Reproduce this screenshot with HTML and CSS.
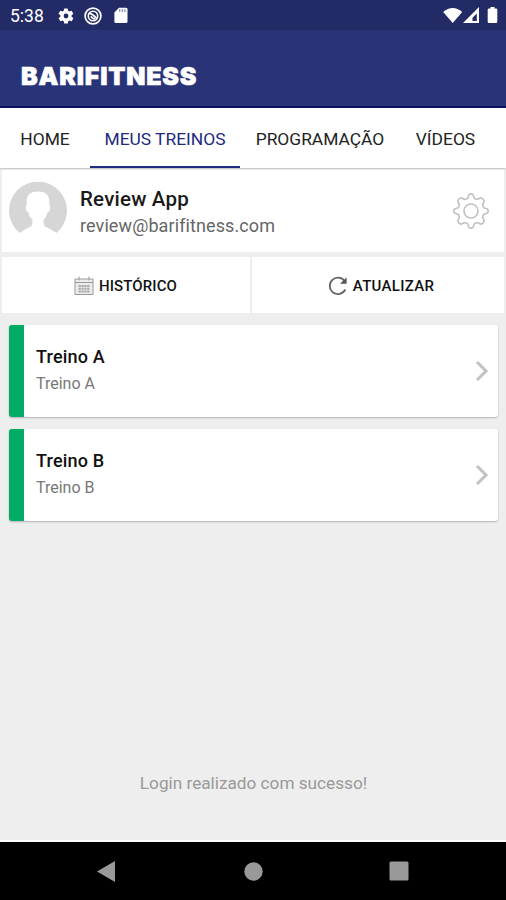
FILE: index.html
```html
<!DOCTYPE html>
<html lang="pt-BR">
<head>
<meta charset="utf-8">
<title>Barifitness</title>
<link rel="stylesheet" href="styles.css">
</head>
<body>
<div class="screen">
  <div class="status">
    <span class="clock">5:38</span>
    <svg class="s-gear" width="18" height="18" viewBox="0 0 24 24"><path fill="#fff" d="M19.4 13a7.500 7.500 0 0 0 0-2l2.100-1.600a.5.5 0 0 0 .1-.6l-2-3.500a.5.5 0 0 0-.6-.2l-2.500 1a7.300 7.300 0 0 0-1.700-1l-.4-2.600a.5.5 0 0 0-.5-.4h-4a.5.5 0 0 0-.5.4L9 5.100a7.300 7.300 0 0 0-1.700 1l-2.500-1a.5.5 0 0 0-.6.2l-2 3.500a.5.5 0 0 0 .1.600L4.500 11a7.500 7.500 0 0 0 0 2l-2.100 1.600a.5.5 0 0 0-.1.600l2 3.500c.1.200.4.300.6.200l2.500-1a7.300 7.300 0 0 0 1.700 1l.4 2.600c0 .2.200.4.5.4h4c.3 0 .5-.2.500-.4l.4-2.600a7.300 7.300 0 0 0 1.700-1l2.500 1c.2.100.5 0 .6-.2l2-3.500a.5.5 0 0 0-.1-.6zM12 15.200a3.200 3.200 0 1 1 0-6.400 3.200 3.200 0 0 1 0 6.400z"/></svg>
    <svg class="s-sync" width="18" height="18" viewBox="0 0 18 18" fill="none" stroke="#fff"><circle cx="9" cy="9" r="7.900" stroke-width="1.700"/><circle cx="9" cy="9" r="4.700" stroke-width="1.600"/><path d="M5.300 6.300Q9 6.800 12.600 11.600M7 9.300q1 2.500 4 2.600" stroke-width="1.700"/></svg>
    <svg class="s-card" width="14" height="17" viewBox="0 0 14 17"><path fill="#fff" d="M5 .7h7q1.500 0 1.500 1.500v12.300q0 1.500-1.500 1.500H1.900Q.4 16 .4 14.500V5.500z"/><path stroke="#8f94b8" stroke-width="1.300" d="M5.700 2v3M8.300 2v3M10.900 2v3"/></svg>
    <svg class="s-right" width="56" height="20" viewBox="0 0 56 20"><path fill="#fff" d="M.2 6Q9.700-2.200 19.200 6L9.700 17z"/><path fill="#fff" fill-rule="evenodd" d="M20 17 36 1v16zM29.500 15h4.300V7.500l-4.300 4.300z"/><path fill="#fff" d="M47.500 1h4v1.500H53q1.300 0 1.300 1.300v11.900q0 1.300-1.300 1.300h-7q-1.300 0-1.300-1.300V3.800q0-1.300 1.300-1.300h1.500z"/></svg>
  </div>
  <header class="appbar"><h1>BARIFITNESS</h1></header>
  <nav class="tabs">
    <a class="tab home"><span>HOME</span></a>
    <a class="tab workouts active"><span>MEUS TREINOS</span></a>
    <a class="tab program"><span>PROGRAMAÇÃO</span></a>
    <a class="tab videos"><span>VÍDEOS</span></a>
  </nav>
  <section class="profile">
    <svg class="avatar" width="58" height="58" viewBox="0 0 58 58"><path fill="#d6d6d6" d="M10.500 51A29 29 0 1 1 47.500 51Q42 47 36 44.500 34.500 43 34.500 37.500 37.500 35.500 38.500 30.500C41 30 42.300 24 40 22.500 41.500 14 37.500 9.500 29 9.500S16.500 14 18 22.500C15.700 24 17 30 19.500 30.500Q20.500 35.500 23.500 37.500 23.500 43 22 44.500 16 47 10.500 51z"/></svg>
    <div class="who"><div class="name">Review App</div><div class="mail">review@barifitness.com</div></div>
    <svg class="gear" width="36" height="36" viewBox="-18 -18 36 36" fill="none" stroke="#bfc1c4" stroke-width="1.600" stroke-linejoin="round"><circle r="7"/><path d="M-2-16.500Q0-17.800 2-16.500L3.300-12.800Q5-11.500 6.700-11.800L9.800-13.300Q12.600-12.600 13.300-9.800L11.800-6.700Q11.500-5 12.800-3.300L16.500-2Q17.800 0 16.500 2L12.800 3.300Q11.500 5 11.800 6.700L13.300 9.800Q12.600 12.600 9.800 13.300L6.700 11.800Q5 11.500 3.300 12.800L2 16.500Q0 17.800-2 16.500L-3.300 12.800Q-5 11.500-6.700 11.800L-9.800 13.300Q-12.600 12.600-13.300 9.800L-11.800 6.700Q-11.500 5-12.800 3.300L-16.500 2Q-17.800 0-16.500-2L-12.800-3.300Q-11.500-5-11.800-6.700L-13.300-9.800Q-12.600-12.600-9.800-13.300L-6.700-11.800Q-5-11.500-3.300-12.800z"/></svg>
  </section>
  <div class="actions">
    <div class="action history">
      <svg width="20" height="20" viewBox="0 0 20 20" fill="none" stroke="#999"><path fill="#ececec" d="M1 3h18v15.500H1z"/><path d="M1 6.500h18M5 .5v4M15 .5v4"/><path stroke="#aaa" stroke-width="2" d="M4.500 10h11M4.500 12.700h11M4.500 15.400h11" stroke-dasharray="2.300 .6"/></svg>
      <span>HISTÓRICO</span>
    </div>
    <div class="action refresh">
      <svg width="20" height="20" viewBox="0 0 20 20" fill="none" stroke="#666" stroke-width="1.800"><path d="M17.300 13.500A8.200 8.200 0 1 1 16.600 5"/><path fill="#555" stroke="none" d="M18.600 1.500v6.300h-6.600z"/></svg>
      <span>ATUALIZAR</span>
    </div>
  </div>
  <main class="list">
    <article class="card"><div class="copy"><h2>Treino A</h2><p>Treino A</p></div><svg class="chevron" width="14" height="22" viewBox="0 0 14 22"><path d="M2 2 11 11 2 20"/></svg></article>
    <article class="card"><div class="copy"><h2>Treino B</h2><p>Treino B</p></div><svg class="chevron" width="14" height="22" viewBox="0 0 14 22"><path d="M2 2 11 11 2 20"/></svg></article>
    <p class="message"><span>Login realizado com sucesso!</span></p>
  </main>
  <footer class="navbar">
    <svg width="18" height="21" viewBox="0 0 18 21"><path fill="#999" d="M0 10.500 18 0v21z"/></svg>
    <svg class="n-home" width="19" height="19" viewBox="0 0 19 19"><circle fill="#999" cx="9.500" cy="9.500" r="9.200"/></svg>
    <svg width="20" height="20" viewBox="0 0 20 20"><rect fill="#999" x=".5" y=".5" width="19" height="19" rx="1.500"/></svg>
  </footer>
</div>
</body>
</html>
```
FILE: styles.css
```css
* { box-sizing: border-box; }
body, h1, h2, p { margin: 0; }
body { font-family: Roboto, "Liberation Sans", sans-serif; background: #eee; }
svg { display: block; flex: none; }
span { white-space: nowrap; }
.screen { width: 506px; height: 900px; display: flex; flex-direction: column; background: #eee; }

.status { height: 30px; flex: none; background: #232b66; color: #fff; display: flex; align-items: center; padding: 1px 8px 0 10px; }
.clock { font-size: 17.5px; line-height: 30px; width: 47px; }
.s-sync { margin-left: 9px; }
.s-card { margin-left: 12px; }
.s-right { margin-left: auto; margin-right: -1px; }

.appbar { height: 78px; flex: none; background: #293377; border-bottom: 2px solid #091263; display: flex; align-items: center; padding: 15px 20px 0 21px; }
.appbar h1 { font-family: Inter, sans-serif; font-weight: 900; font-size: 25px; line-height: 30px; color: #fff; letter-spacing: 0.8px; -webkit-text-stroke: 0.6px #fff; }

.tabs { height: 60px; flex: none; background: #fff; display: flex; box-shadow: 0 1px 2px rgba(0,0,0,.22); z-index: 1; }
.tab { display: flex; align-items: center; justify-content: center; font-size: 17.400px; color: #222; border-bottom: 2px solid transparent; padding-top: 3px; }
.home { width: 90px; }
.workouts { width: 150px; }
.program { width: 160px; }
.videos { width: 91px; }
.active { color: #202a80; border-color: #202a80; }

.profile { height: 83px; margin: 1px 2px 0; flex: none; background: #fff; display: flex; align-items: center; padding: 0 15px 0 7px; }
.who { margin-left: 13px; flex: 1; }
.name { font-size: 20.500px; line-height: 26px; font-weight: 500; color: #1a1a1a; padding-top: 3px; letter-spacing: 0.2px; }
.mail { font-size: 18px; line-height: 27px; color: #666; letter-spacing: 0.1px; }

.actions { height: 56px; margin: 5px 2px 0; flex: none; display: grid; grid-template-columns: 248px 1fr; gap: 2px; }
.action { background: #fff; display: flex; align-items: center; justify-content: center; gap: 5px; font-size: 15px; font-weight: 500; color: #111; padding-top: 1px; }
.history { gap: 5px; padding-right: 1px; letter-spacing: 0.1px; }
.refresh { padding-left: 6px; letter-spacing: 0.3px; }

.list { flex: 1; padding: 12px 8px 0 9px; display: flex; flex-direction: column; gap: 12px; border-bottom: 2px solid #fff; }
.card { height: 92px; background: #fff; border-left: 15px solid #02ac68; border-radius: 3px; box-shadow: 0 1px 2px rgba(0,0,0,.25); display: flex; align-items: center; justify-content: space-between; padding: 0 9px 0 12px; }
.copy { padding-bottom: 2px; }
.card h2 { font-size: 18px; line-height: 26px; font-weight: 500; color: #111; letter-spacing: 0.2px; }
.card p { font-size: 16px; line-height: 27px; color: #777; }
.chevron { fill: none; stroke: #c2c2c2; stroke-width: 3; }
.message { margin-top: auto; padding-bottom: 45px; text-align: center; font-size: 17.200px; line-height: 24px; color: #999; }

.navbar { height: 58px; flex: none; background: #000; display: flex; align-items: center; justify-content: space-between; padding: 0 97px; }
.n-home { margin-left: 2px; }
```
